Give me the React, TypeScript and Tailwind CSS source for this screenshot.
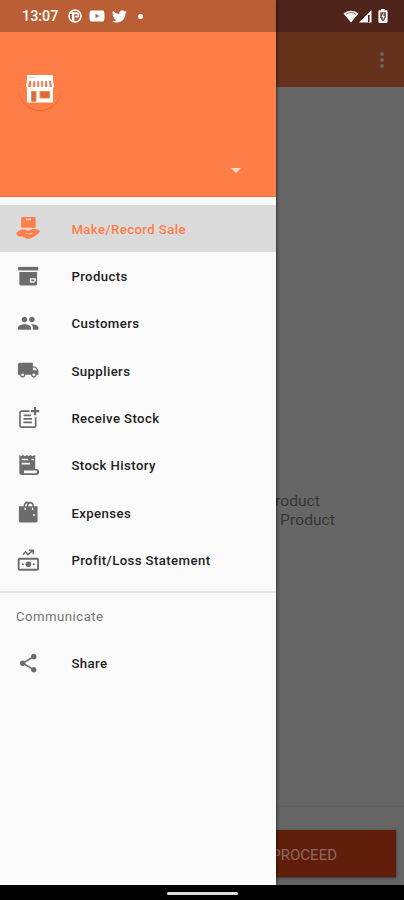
import React from "react";

interface MenuItem {
  label: string;
  icon: React.ElementType;
  active?: boolean;
}

interface IconProps {
  className?: string;
}

function Svg({ className, children }: IconProps & { children: React.ReactNode }) {
  return (
    <svg viewBox="0 0 24 24" fill="currentColor" className={className}>
      {children}
    </svg>
  );
}

const SaleIcon = ({ className }: IconProps) => (
  <Svg className={className}>
    <path
      fillRule="evenodd"
      d="M5.500 0h13.500a1 1 0 0 1 1 1v9.500a1 1 0 0 1-1 1H5.500a1 1 0 0 1-1-1V1a1 1 0 0 1 1-1zM9.500 1.500v2.200l1.300-.6 1.400.6 1.400-.6 1.400.6V1.500z"
    />
    <path
      fillRule="evenodd"
      d="M-.5 16.500 3 14.300c1.800-1 3.400-1.200 5.200-.8l3.600 1.200 3.700-1.300c2.500-.8 5.500-.6 7.500.3 1.900.8 1.700 2.600.3 3.500l-4.300 3.300-4.200 2.300c-1.500.6-3 .7-4.500.2L5.500 21H2.200L-.5 18.800zM9 17.300l-.2.800 3.800.5c1.700.1 3.300-.3 4.400-1.300l-.5-.4c-1.400.8-2.700.9-4 .7z"
    />
  </Svg>
);

const ProductsIcon = ({ className }: IconProps) => (
  <Svg className={className}>
    <path d="M1.200 2h21.600v3.800H1.200z" />
    <path
      fillRule="evenodd"
      d="M2.500 7.400h19v12.800a1.800 1.800 0 0 1-1.800 1.800H4.300a1.800 1.800 0 0 1-1.800-1.800zM13.800 14.200v4.800h4.400l1.900-1.900v-2.900z"
    />
    <path d="M15.400 15.600h3v1.900h-3z" />
  </Svg>
);

const CustomersIcon = ({ className }: IconProps) => (
  <Svg className={className}>
    <path d="M16 11c1.660 0 2.990-1.340 2.990-3S17.660 5 16 5s-3 1.340-3 3 1.340 3 3 3zm-8 0c1.660 0 2.990-1.340 2.990-3S9.660 5 8 5 5 6.340 5 8s1.340 3 3 3zm0 2c-2.330 0-7 1.170-7 3.500V19h14v-2.500c0-2.330-4.670-3.500-7-3.500zm8 0c-.290 0-.620.020-.970.050 1.160.840 1.970 1.970 1.970 3.450V19h6v-2.500c0-2.330-4.670-3.500-7-3.500z" />
  </Svg>
);

const SuppliersIcon = ({ className }: IconProps) => (
  <Svg className={className}>
    <path d="M20 8h-3V4H3c-1.100 0-2 .900-2 2v11h2c0 1.660 1.340 3 3 3s3-1.340 3-3h6c0 1.660 1.340 3 3 3s3-1.340 3-3h2v-5l-3-4zM6 18.500c-.830 0-1.500-.670-1.500-1.500s.670-1.500 1.500-1.500 1.500.670 1.500 1.500-.670 1.500-1.500 1.500zm13.500-9l1.960 2.500H17V9.500h2.500zm-1.500 9c-.830 0-1.500-.670-1.500-1.500s.670-1.500 1.500-1.500 1.500.670 1.500 1.500-.670 1.500-1.500 1.500z" />
  </Svg>
);

const ReceiveIcon = ({ className }: IconProps) => (
  <Svg className={className}>
    <path
      d="M13.500 4.500H5A1.800 1.800 0 0 0 3.200 6.300v13.400A1.800 1.800 0 0 0 5 21.500h13.200a1.800 1.800 0 0 0 1.800-1.800V11"
      fill="none"
      stroke="currentColor"
      strokeWidth="1.800"
    />
    <path d="M18.200 0h2.300v3.200h3.300v2.300h-3.300v3.300h-2.300V5.500h-3.300V3.200h3.300zM7 8h8v1.900H7zM7 11.800h9v1.900H7zM7 15.600h9v1.900H7z" />
  </Svg>
);

const HistoryIcon = ({ className }: IconProps) => (
  <Svg className={className}>
    <path
      fillRule="evenodd"
      d="M2.500 1l2 1.300L6.500 1l2 1.300L10.500 1l2 1.300L14.500 1l2 1.300L19.500 1v15h1a3.200 3.200 0 0 1 0 6.500H5.500a3 3 0 0 1-3-3zM5 5v1.800h7V5zM5 9.500v1.800h9V9.500zM15.500 5v1.800H18V5zM7.300 17.800c.5 1 .3 2-.2 2.900h13.100c1.600 0 1.600-2.900 0-2.900z"
    />
  </Svg>
);

const ExpensesIcon = ({ className }: IconProps) => (
  <Svg className={className}>
    <path
      fillRule="evenodd"
      d="M2 5.500h5C7.300 2.300 8.500.5 11 .5c1 0 1.600.3 2 .7 2.600-1.200 5.300.8 5.300 4.300H22v16a1.500 1.500 0 0 1-1.500 1.500h-17A1.500 1.500 0 0 1 2 21.500zm6.500 0h2c0-1.200.2-2 .7-2.900-1.500-.3-2.600.9-2.700 2.900zm3.700 0h4.300c0-1.700-.9-2.800-2.200-2.800s-2.100 1.100-2.100 2.800zM8 7.200v2.500h1.400V7.200zM16 7.200v2.500h1.400V7.200zM17.500 14v2.200H19V14z"
    />
  </Svg>
);

const ProfitIcon = ({ className }: IconProps) => (
  <Svg className={className}>
    <path
      d="M6.500 6 9 3l2.700 3 5-4.300M12.700 1.300h4.800v4.200"
      fill="none"
      stroke="currentColor"
      strokeWidth="1.600"
    />
    <rect x="1.800" y="10.500" width="20.800" height="11.800" rx="1" fill="none" stroke="currentColor" strokeWidth="2" />
    <circle cx="12.200" cy="16.400" r="3" />
    <circle cx="6.300" cy="16.400" r="1.100" />
    <circle cx="18" cy="16.400" r="1.100" />
  </Svg>
);

const ShareIcon = ({ className }: IconProps) => (
  <Svg className={className}>
    <path d="M18 16.080c-.760 0-1.440.300-1.960.770L8.910 12.700c.050-.230.090-.460.090-.700s-.040-.470-.090-.700l7.050-4.110c.540.500 1.250.810 2.040.810 1.660 0 3-1.340 3-3s-1.340-3-3-3-3 1.340-3 3c0 .240.040.470.090.700L8.040 9.810C7.500 9.310 6.790 9 6 9c-1.660 0-3 1.340-3 3s1.340 3 3 3c.790 0 1.500-.310 2.040-.810l7.120 4.160c-.050.210-.080.430-.080.650 0 1.610 1.310 2.920 2.920 2.920s2.920-1.310 2.920-2.920-1.310-2.920-2.920-2.920z" />
  </Svg>
);

const StoreLogo = () => (
  <svg viewBox="0 0 28 28" className="h-7 w-7">
    <path d="M2 0h24a1 1 0 0 1 1 1v5l1 5-1 2v14.500H1V13l-1-2 1-5V1a1 1 0 0 1 1-1z" fill="#fff" />
    <path
      d="M3 6h2.200v6H2zM7.300 6h2v6H6.800zM11.300 6h1.800v6h-2zM15.200 6H17v6h-1.800zM19 6h2l.4 6H19zM23 6h2l1 6h-2.500z"
      fill="#f28253"
    />
    <path d="M3 2.500h6" stroke="#f8b89d" strokeWidth=".8" />
    <path d="M5 16h5.500v10.500H5zM13.500 16h10.500v7.500H13.500z" fill="#f2874f" />
    <path d="M6 17h3.500v9.500H6zM14.500 17h8.500v5.500h-8.500z" fill="#d9683a" />
  </svg>
);

const menuItems: MenuItem[] = [
  { label: "Make/Record Sale", icon: SaleIcon, active: true },
  { label: "Products", icon: ProductsIcon },
  { label: "Customers", icon: CustomersIcon },
  { label: "Suppliers", icon: SuppliersIcon },
  { label: "Receive Stock", icon: ReceiveIcon },
  { label: "Stock History", icon: HistoryIcon },
  { label: "Expenses", icon: ExpensesIcon },
  { label: "Profit/Loss Statement", icon: ProfitIcon },
];

function DrawerItem({ label, icon: Icon, active }: MenuItem) {
  return (
    <div
      className={`flex h-[47.33px] items-center pl-[17px] text-[13.2px] font-medium tracking-[0.4px] ${
        active ? "bg-[#dadada] text-[#ff7e47]" : "text-[#222222]"
      }`}
    >
      <Icon
        className={`mr-8 h-[22.400px] w-[22.400px] shrink-0 overflow-visible ${active ? "" : "text-[#6c6c6c]"}`}
      />
      <span className="pt-0.5">{label}</span>
    </div>
  );
}

function Drawer() {
  return (
    <aside className="relative z-10 flex w-[276px] shrink-0 flex-col bg-[#fafafa] shadow-[1px_0_3px_rgba(0,0,0,0.5)]">
      {/* Status bar, left side */}
      <div className="flex h-8 items-center bg-[#b95e35] pl-[22px] text-white">
        <span className="w-[46px] pt-0.5 text-[14.300px] font-medium">13:07</span>
        <svg viewBox="0 0 14 14" className="h-3.5 w-3.5">
          <circle cx="7" cy="7" r="6" fill="none" stroke="#fff" strokeWidth="1.600" />
          <path d="M1.500 4.200h7.200a1.700 1.700 0 0 1 0 3.400H7.500" fill="none" stroke="#fff" strokeWidth="1.700" />
          <path d="M4 3.500h2.400v9.500L4 12z" fill="#fff" />
        </svg>
        <svg viewBox="0 0 16 12" className="ml-[7px] h-3 w-4">
          <path
            fillRule="evenodd"
            d="M2.500.5h11C15 .5 15.500 1.500 15.500 6s-.5 5.500-2 5.500h-11C1 11.500.5 10.500.5 6S1 .5 2.500.5zM6.500 3.800v4.400l3.700-2.200z"
            fill="#fff"
          />
        </svg>
        <svg viewBox="0 0 24 24" fill="#fff" className="ml-[7px] h-[15px] w-[15px]">
          <path d="M23.950 4.570a10 10 0 0 1-2.820.780 4.960 4.960 0 0 0 2.160-2.730 9.900 9.900 0 0 1-3.120 1.190 4.920 4.920 0 0 0-8.390 4.480A13.980 13.980 0 0 1 1.640 3.160a4.920 4.920 0 0 0 1.520 6.570 4.900 4.900 0 0 1-2.230-.610v.060a4.920 4.920 0 0 0 3.950 4.830 5 5 0 0 1-2.210.080 4.940 4.940 0 0 0 4.600 3.420A9.870 9.870 0 0 1 0 19.540a14 14 0 0 0 7.550 2.210c9.050 0 14-7.500 14-13.980 0-.210 0-.420-.020-.630a9.900 9.900 0 0 0 2.420-2.570z" />
        </svg>
        <span className="ml-[11px] h-[5px] w-[5px] rounded-full bg-white" />
      </div>

      {/* Account header */}
      <div className="flex h-[165px] flex-col justify-between border-b border-[#f26d25] bg-[#ff7e47] pb-[23px] pl-[19px] pr-[35px] pt-[36px]">
        <div className="flex h-[42px] w-[42px] items-center justify-center rounded-full shadow-[0_1px_1px_rgba(150,50,10,0.3)]">
          <StoreLogo />
        </div>
        <svg viewBox="0 0 10 5" className="h-[5px] w-[10px] self-end">
          <path d="M0 0h10L5 5z" fill="#ffdccd" />
        </svg>
      </div>

      <nav className="mt-2">
        {menuItems.map((item) => (
          <DrawerItem key={item.label} {...item} />
        ))}
      </nav>

      <div className="mt-[7px] border-t-2 border-[#e4e4e4]">
        <div className="flex h-[47px] items-center pl-4 pt-0.5 text-[13.2px] tracking-[0.47px] text-[#757575]">
          Communicate
        </div>
        <DrawerItem label="Share" icon={ShareIcon} />
      </div>
    </aside>
  );
}

// Sale screen, dimmed behind the open drawer
function DimmedScreen() {
  return (
    <main className="flex min-w-0 flex-1 flex-col overflow-hidden bg-[#666666]">
      <div className="flex h-8 items-center justify-end bg-[#4f241a] pr-4 text-white">
        <svg viewBox="0 0 16 13" className="h-[13px] w-4">
          <path d="M8 12.500.5 3.500a11.500 11.500 0 0 1 15 0z" fill="#fff" />
          <path d="M3 4.300a8.500 8.500 0 0 1 10 0" stroke="#83645d" strokeWidth="1" fill="none" />
        </svg>
        <svg viewBox="0 0 13 13" className="h-[13px] w-[13px]">
          <path d="M0 12.500 12.500 0v12.500z" fill="#fff" />
          <path d="M9.800 5v7" stroke="#4f241a" strokeWidth="1.600" />
        </svg>
        <svg viewBox="0 0 10 14" className="ml-1.5 h-3.5 w-[10px]">
          <path
            d="M3 0h4v1.300h1.200a1.400 1.400 0 0 1 1.400 1.400v9.800a1.400 1.400 0 0 1-1.400 1.400H1.800a1.400 1.400 0 0 1-1.400-1.400V2.700a1.400 1.400 0 0 1 1.400-1.400H3z"
            fill="#fff"
          />
          <path d="M2.200 3.200h5.600v5.300L5.500 12.300h-1L2.200 8.500z" fill="#6e4a42" />
          <path d="M5.700 3.300 3.500 7.800h1.300v3.500l2-4.300H5.300z" fill="#fff" />
        </svg>
      </div>
      <div className="flex h-[55px] items-center justify-end bg-[#66321c] pr-5">
        <svg viewBox="0 0 4 16" className="h-4 w-1" fill="#6b6766">
          <circle cx="2" cy="2" r="1.900" />
          <circle cx="2" cy="8" r="1.900" />
          <circle cx="2" cy="14" r="1.900" />
        </svg>
      </div>

      <div className="flex flex-1 flex-col items-end pt-[405px] text-[15.5px] leading-[18.5px] tracking-[0.1px] text-[#353535]">
        <span className="mr-[84px]">Product</span>
        <span className="mr-[69px] whitespace-nowrap">Product</span>
      </div>

      <div className="border-t border-[#616161] pb-2 pr-2 pt-[23px]">
        <div className="flex h-[47px] items-center justify-end bg-[#611e0b] pr-[59px] pt-[3px] text-[15px] text-[#8d6a60] shadow-[0_1px_3px_rgba(0,0,0,0.5)]">
          PROCEED
        </div>
      </div>
    </main>
  );
}

export default function App() {
  return (
    <div className="flex h-[900px] w-[404px] flex-col overflow-hidden bg-black font-['Roboto',sans-serif]">
      <div className="flex min-h-0 flex-1">
        <Drawer />
        <DimmedScreen />
      </div>
      {/* Gesture bar */}
      <div className="flex h-[15px] items-center justify-center bg-black pt-[2px]">
        <div className="h-[3px] w-[71px] rounded-full bg-[#dedede]" />
      </div>
    </div>
  );
}
